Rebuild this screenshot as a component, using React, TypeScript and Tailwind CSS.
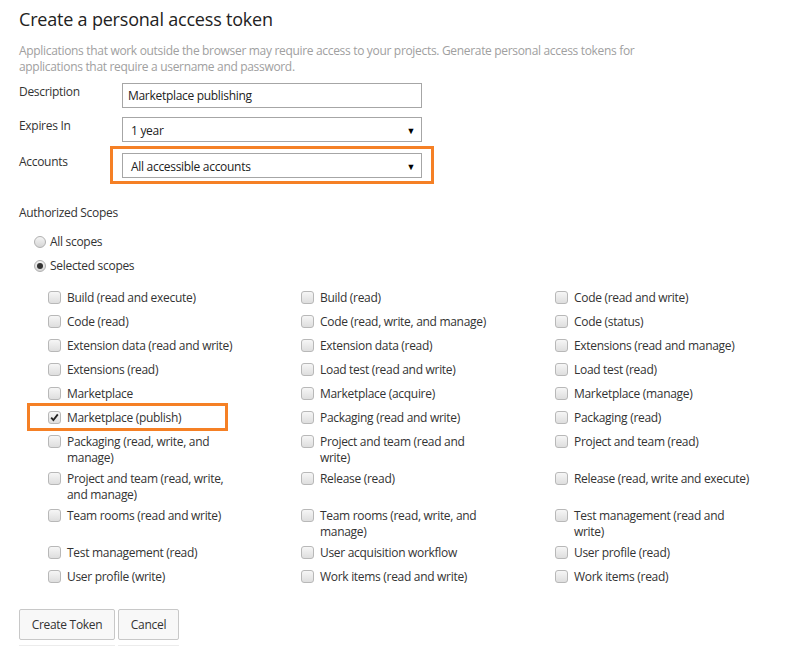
const scopes: string[][] = [
  ['Build (read and execute)', 'Build (read)', 'Code (read and write)'],
  ['Code (read)', 'Code (read, write, and manage)', 'Code (status)'],
  ['Extension data (read and write)', 'Extension data (read)', 'Extensions (read and manage)'],
  ['Extensions (read)', 'Load test (read and write)', 'Load test (read)'],
  ['Marketplace', 'Marketplace (acquire)', 'Marketplace (manage)'],
  ['Marketplace (publish)', 'Packaging (read and write)', 'Packaging (read)'],
  ['Packaging (read, write, and manage)', 'Project and team (read and write)', 'Project and team (read)'],
  ['Project and team (read, write, and manage)', 'Release (read)', 'Release (read, write and execute)'],
  ['Team rooms (read and write)', 'Team rooms (read, write, and manage)', 'Test management (read and write)'],
  ['Test management (read)', 'User acquisition workflow', 'User profile (read)'],
  ['User profile (write)', 'Work items (read and write)', 'Work items (read)'],
];

const Checkbox = ({ checked }: { checked?: boolean }) => (
  <span className="mt-[5px] flex h-[13px] w-[13px] shrink-0 items-center justify-center rounded-[3px] border border-[#b8b8b8] bg-gradient-to-b from-[#f6f6f6] to-[#dedede]">
    {checked && (
      <svg width="9" height="9" viewBox="0 0 9 9">
        <path d="M1.2 4.6 L3.4 7 L7.8 1.4" fill="none" stroke="#222" strokeWidth="1.8" />
      </svg>
    )}
  </span>
);

const Radio = ({ checked }: { checked?: boolean }) => (
  <span className="flex h-[12px] w-[12px] shrink-0 items-center justify-center rounded-full border border-[#b0b0b0] bg-gradient-to-b from-[#f4f4f4] to-[#d6d6d6]">
    {checked && <span className="h-[6px] w-[6px] rounded-full bg-[#333]" />}
  </span>
);

const Select = ({ value }: { value: string }) => (
  <div className="flex h-[25px] w-[300px] items-center justify-between border border-[#a6a6a6] bg-white pl-[8px] pr-[6px] pt-[2px] text-[12px] text-[#222]">
    <span>{value}</span>
    <span className="text-[9px] leading-none text-black">▼</span>
  </div>
);

export default function App() {
  return (
    <div
      className="min-h-screen bg-white pl-[19px] pt-[5px] tracking-[-0.3px] text-[#333]"
      style={{ fontFamily: '"Open Sans", "Noto Sans", sans-serif' }}
    >
      <h1 className="text-[18px] font-normal leading-[28px] tracking-[-0.2px] text-[#222]">Create a personal access token</h1>

      <p className="mt-[10px] w-[660px] text-[12px] leading-[16px] tracking-[-0.32px] text-[#a0a0a0]">
        Applications that work outside the browser may require access to your projects. Generate personal access tokens for
        <br />
        applications that require a username and password.
      </p>

      <div className="mt-[8px] flex items-start">
        <label className="w-[103px] pt-[1px] text-[12px] leading-[16px]">Description</label>
        <div className="flex h-[25px] w-[300px] items-center border border-[#a6a6a6] bg-white px-[5px] pt-[1px] text-[12px] text-[#222]">
          Marketplace publishing
        </div>
      </div>

      <div className="mt-[9px] flex items-start">
        <label className="w-[103px] pt-[1px] text-[12px] leading-[16px]">Expires In</label>
        <Select value="1 year" />
      </div>

      <div className="mt-[11px] flex items-start">
        <label className="w-[103px] pt-[1px] text-[12px] leading-[16px]">Accounts</label>
        <div className="relative">
          <Select value="All accessible accounts" />
          <span className="pointer-events-none absolute -bottom-[6px] -left-[12px] -right-[12px] -top-[7px] border-[3px] border-[#f58025]" />
        </div>
      </div>

      <div className="mt-[27px] text-[12px] leading-[16px]">Authorized Scopes</div>

      <div className="mt-[9px] pl-[15px] text-[12px]">
        <div className="flex h-[24px] items-center gap-[4px]">
          <Radio />
          <span>All scopes</span>
        </div>
        <div className="flex h-[24px] items-center gap-[4px]">
          <Radio checked />
          <span>Selected scopes</span>
        </div>
      </div>

      <div className="ml-[29px] mt-[8px] grid grid-cols-[253px_254px_1fr] text-[12px] leading-[16px]">
        {scopes.flat().map((label, i) => (
          <div key={i} className="relative flex min-h-[24px] items-start gap-[6px] pb-[1px]">
            <Checkbox checked={label === 'Marketplace (publish)'} />
            <span className="w-[176px] pt-[4px]">{label}</span>
            {label === 'Marketplace (publish)' && (
              <span className="pointer-events-none absolute -left-[21px] top-[-3px] h-[28px] w-[201px] border-[3px] border-[#f58025]" />
            )}
          </div>
        ))}
      </div>

      <div className="mt-[20px] flex gap-[3px] text-[12px] text-[#333]">
        <button className="h-[31px] w-[96px] rounded-[2px] border border-[#c8c8c8] bg-[#f8f8f8]">Create Token</button>
        <button className="h-[31px] w-[61px] rounded-[2px] border border-[#c8c8c8] bg-[#f8f8f8]">Cancel</button>
      </div>
      <div className="mt-[5px] flex gap-[3px]">
        <span className="h-px w-[96px] bg-[#ececec]" />
        <span className="h-px w-[61px] bg-[#ececec]" />
      </div>
    </div>
  );
}
